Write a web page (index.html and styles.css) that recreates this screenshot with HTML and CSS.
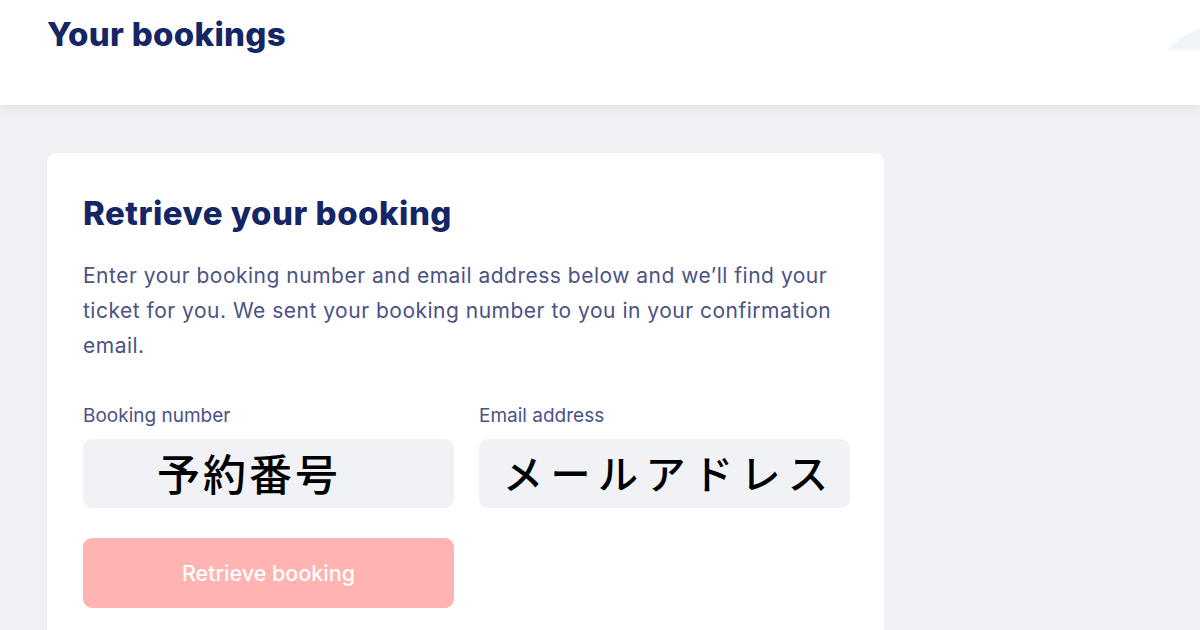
FILE: index.html
```html
<!DOCTYPE html>
<html lang="en">
<head>
<meta charset="utf-8">
<title>Your bookings</title>
<link rel="stylesheet" href="styles.css">
</head>
<body>
<header class="top">
  <h1 class="page-title">Your bookings</h1>
  <svg class="cloud" width="34" height="26" viewBox="0 0 34 26"><path d="M2 24 C6 18 14 12 22 8 C26 5 30 3 34 2 L34 24 Z" fill="#eff5f9"/></svg>
</header>
<main class="main">
  <section class="card">
    <h2 class="card-title">Retrieve your booking</h2>
    <p class="intro">Enter your booking number and email address below and we’ll find your ticket for you. We sent your booking number to you in your confirmation email.</p>
    <form class="form">
      <div class="field">
        <label class="label">Booking number</label>
        <div class="input input-num">予約番号</div>
      </div>
      <div class="field">
        <label class="label">Email address</label>
        <div class="input input-mail">メールアドレス</div>
      </div>
      <div class="field">
        <button type="button" class="btn">Retrieve booking</button>
      </div>
    </form>
  </section>
</main>
</body>
</html>
```
FILE: styles.css
```css
* { box-sizing: border-box; }
html, body { margin: 0; padding: 0; }
body {
  background: #f0f1f5;
  font-family: Inter, "Noto Sans", sans-serif;
  width: 1200px;
  height: 630px;
  overflow: hidden;
}
.top {
  position: relative;
  background: #ffffff;
  height: 105px;
  padding: 14px 47px 0;
  box-shadow: 0 2px 10px rgba(40, 50, 90, 0.09);
  z-index: 1;
}
.page-title {
  margin: 0;
  font-size: 33px;
  font-weight: 800;
  color: #152666;
  letter-spacing: 0.3px;
  line-height: 40px;
}
.cloud {
  position: absolute;
  right: 0;
  top: 26px;
}
.main {
  padding: 48px 47px 0;
}
.card {
  width: 837px;
  background: #ffffff;
  border-radius: 9px;
  padding: 40px 34px 40px 36px;
  min-height: 520px;
}
.card-title {
  margin: 0;
  font-size: 33px;
  font-weight: 800;
  color: #152666;
  line-height: 40px;
  letter-spacing: 0.5px;
}
.intro {
  margin: 25px 0 0;
  font-size: 21px;
  line-height: 35px;
  color: #4b5285;
  letter-spacing: 0.5px;
}
.form {
  margin-top: 41px;
  display: grid;
  grid-template-columns: 371px 371px;
  column-gap: 25px;
  row-gap: 30px;
}
.field {
  display: flex;
  flex-direction: column;
}
.label {
  font-size: 19px;
  line-height: 24px;
  color: #4b5285;
  margin-bottom: 11px;
}
.input {
  height: 69px;
  background: #f1f2f6;
  border-radius: 9px;
  font-family: "Noto Sans CJK JP", sans-serif;
  color: #000000;
  font-size: 43px;
  font-weight: 500;
  line-height: 67px;
  white-space: nowrap;
  overflow: hidden;
}
.input-num { padding-left: 74px; letter-spacing: 3px; }
.input-mail { padding-left: 24px; font-size: 40px; letter-spacing: 7.5px; }
.btn {
  height: 70px;
  width: 371px;
  border: 0;
  border-radius: 9px;
  background: #ffb4b2;
  color: #ffffff;
  font-family: Inter, "Noto Sans", sans-serif;
  font-size: 21.5px;
  font-weight: 500;
  letter-spacing: 0px;
  cursor: pointer;
}
```
